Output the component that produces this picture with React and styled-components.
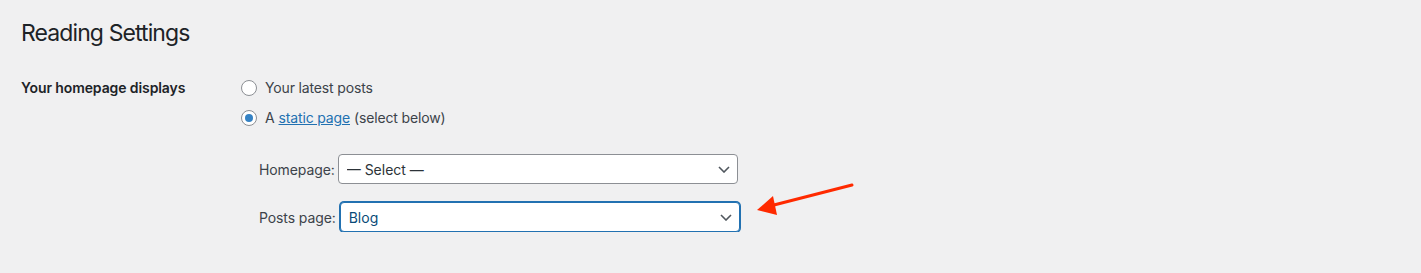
import React, { useState } from 'react';
import styled, { createGlobalStyle } from 'styled-components';

const GlobalStyle = createGlobalStyle`
	body {
		margin: 0;
		background: #f0f0f1;
		font-family: Inter, "Liberation Sans", sans-serif;
		color: #3c434a;
		font-size: 14px;
	}
`;

const Page = styled.div`
	padding: 19px 21px 0;
	display: flex;
	flex-direction: column;
	gap: 30px;
`;
const STitle = styled.h1`
	margin: 0;
	font-size: 23px;
	font-weight: 400;
	line-height: 29px;
	letter-spacing: -0.9px;
	color: #1d2327;
`;
const SRow = styled.div`
	display: flex;
	align-items: flex-start;
`;
const SHeading = styled.div`
	width: 220px;
	flex-shrink: 0;
	font-weight: 600;
	line-height: 20px;
	letter-spacing: -0.1px;
	color: #1d2327;
`;
const SOptions = styled.div`
	display: flex;
	flex-direction: column;
	gap: 10px;
`;
const SRadioLabel = styled.label`
	display: flex;
	align-items: center;
	line-height: 20px;
	gap: 8px;
	letter-spacing: -0.15px;
	cursor: pointer;
`;
const SRadio = styled.input.attrs(() => ({
	type: "radio",
}))`
	appearance: none;
	margin: 0;
	width: 16px;
	height: 16px;
	border: 1px solid #8c8f94;
	border-radius: 50%;
	background: #fff;
	display: grid;
	place-items: center;
	&:checked::before {
		content: "";
		width: 8px;
		height: 8px;
		border-radius: 50%;
		background: #3582c4;
	}
`;
const SLink = styled.a`
	color: #2271b1;
	text-decoration: underline;
	margin: 0 4px;
`;
const SPages = styled.div`
	display: flex;
	flex-direction: column;
	gap: 18px;
	margin: 26px 0 0 18px;
`;
const SPageRow = styled.label`
	display: flex;
	align-items: center;
	gap: 3px;
	letter-spacing: -0.1px;
`;
const SSelectWrap = styled.div`
	position: relative;
	width: 400px;
	height: 30px;
	margin-left: ${props => props.$focused ? '1px' : '0'};
`;
const SSelect = styled.select`
	appearance: none;
	box-sizing: border-box;
	width: 100%;
	height: 100%;
	margin: 0;
	padding: 0 24px 0 8px;
	font: inherit;
	font-size: 14px;
	background: #fff;
	border-radius: 4px;
	border: 1px solid ${props => props.$focused ? '#2271b1' : '#8c8f94'};
	box-shadow: ${props => props.$focused ? '0 0 0 1px #2271b1' : 'none'};
	color: ${props => props.$focused ? '#0a4b78' : '#2c3338'};
	outline: none;
`;
const SChevron = styled.svg`
	position: absolute;
	right: 8px;
	top: 12px;
	pointer-events: none;
`;
const SArrow = styled.svg`
	margin-left: 11px;
	align-self: flex-start;
	margin-top: -20px;
`;

const Chevron = () => (
	<SChevron width="12" height="7" viewBox="0 0 12 7">
		<path d="M1 1l5 5 5-5" fill="none" stroke="#50575e" strokeWidth="1.6" />
	</SChevron>
);

const PageSelect = (props) => (
	<SPageRow>
		{props.label}
		<SSelectWrap $focused={props.focused}>
			<SSelect $focused={props.focused} defaultValue={props.value}>
				{props.options.map(o => <option key={o}>{o}</option>)}
			</SSelect>
			<Chevron />
		</SSelectWrap>
		{props.children}
	</SPageRow>
);

const App = () => {
	const [mode, setMode] = useState('page');

	return (
		<Page>
			<GlobalStyle />
			<STitle>Reading Settings</STitle>
			<SRow>
				<SHeading>Your homepage displays</SHeading>
				<div>
					<SOptions>
						<SRadioLabel>
							<SRadio name="front" checked={mode === 'posts'} onChange={() => setMode('posts')} />
							Your latest posts
						</SRadioLabel>
						<SRadioLabel>
							<SRadio name="front" checked={mode === 'page'} onChange={() => setMode('page')} />
							<span>A<SLink href="#">static page</SLink>(select below)</span>
						</SRadioLabel>
					</SOptions>
					<SPages>
						<PageSelect label="Homepage:" value="— Select —" options={['— Select —', 'Sample Page', 'Blog']} />
						<PageSelect label="Posts page:" value="Blog" options={['— Select —', 'Sample Page', 'Blog']} focused>
							<SArrow width="104" height="40" viewBox="0 0 104 40">
								<line x1="98" y1="3" x2="16" y2="24" stroke="#ff2a00" strokeWidth="3" strokeLinecap="round" />
								<polygon points="3,28 19,14 23,33" fill="#ff2a00" />
							</SArrow>
						</PageSelect>
					</SPages>
				</div>
			</SRow>
		</Page>
	);
};

export default App;
